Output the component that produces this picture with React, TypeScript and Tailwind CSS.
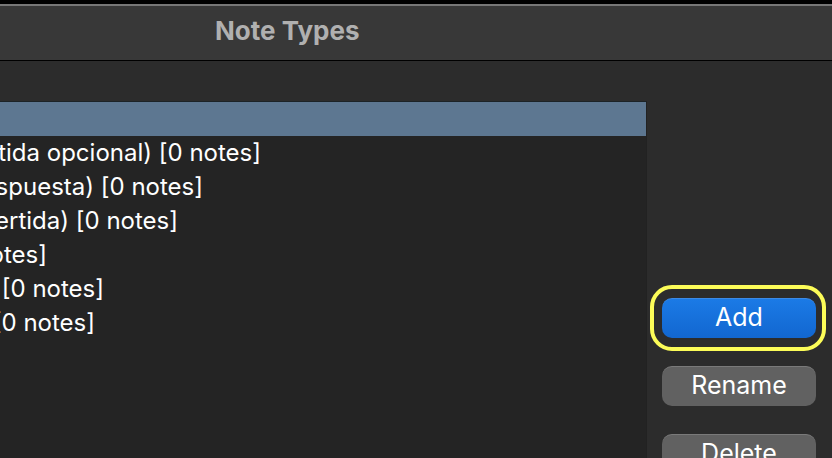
type Row = { label: string; width: string };

const rows: Row[] = [
  { label: "tida opcional) [0 notes]", width: "w-[261px]" },
  { label: "spuesta) [0 notes]", width: "w-[203px]" },
  { label: "ertida) [0 notes]", width: "w-[178px]" },
  { label: "otes]", width: "w-[47px]" },
  { label: "[0 notes]", width: "w-[104px]" },
  { label: "[0 notes]", width: "w-[95px]" },
];

const buttonBase =
  "flex h-10 w-full shrink-0 items-center justify-center rounded-[10px] border-t pb-1 text-[25px] leading-7 text-white";

export default function App() {
  return (
    <div className="flex h-screen flex-col overflow-hidden bg-[#2c2c2c] font-['Inter','Liberation_Sans',sans-serif]">
      <div className="h-1 shrink-0 bg-black" />
      <header className="flex h-[57px] shrink-0 items-center border-t-2 border-b border-t-[#777777] border-b-black bg-[#383838] pl-[215px]">
        <h1 className="pb-1 text-[26px] leading-8 font-bold text-[#b0b0b0]">Note Types</h1>
      </header>
      <main className="flex min-h-0 flex-1 pt-10 pr-4">
        <ul className="min-w-0 flex-1 border-t border-r border-[#1c2327] border-r-[#222222] bg-[#242424] text-2xl text-white">
          <li className="h-[34px] bg-[#5d7791]" />
          {rows.map((row) => (
            <li key={row.width} className="h-[34px]">
              <div className={`flex justify-end overflow-hidden leading-[34px] whitespace-nowrap ${row.width}`}>
                <span className="shrink-0">{row.label}</span>
              </div>
            </li>
          ))}
        </ul>
        <div className="ml-[15px] flex w-[154px] shrink-0 flex-col gap-7 pt-[197px]">
          <div className="relative">
            <button type="button" className={`${buttonBase} border-[#3c8ae6] bg-linear-to-b from-[#1b7ae6] to-[#1267d0]`}>
              Add
            </button>
            <div className="pointer-events-none absolute -inset-y-[13px] -right-2.5 -left-3 rounded-[22px] border-4 border-[#fcfc58]" />
          </div>
          <button type="button" className={`${buttonBase} border-[#7a7a7a] bg-[#616161]`}>
            Rename
          </button>
          <button type="button" className={`${buttonBase} border-[#7a7a7a] bg-[#616161]`}>
            Delete
          </button>
        </div>
      </main>
    </div>
  );
}
